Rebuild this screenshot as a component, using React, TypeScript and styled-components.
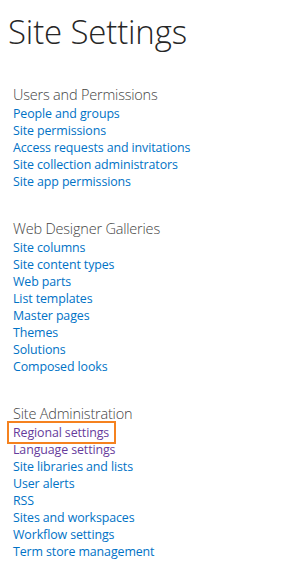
import styled, { createGlobalStyle } from 'styled-components';

const GlobalStyle = createGlobalStyle`
  html, body {
    margin: 0;
    padding: 0;
    background: #ffffff;
  }
  body {
    font-family: "Open Sans", "Liberation Sans", sans-serif;
  }
`;

const Page = styled.div`
  width: 300px;
  height: 571px;
  overflow: hidden;
  background: #ffffff;
`;

const Title = styled.h1`
  margin: 0;
  padding: 10px 0 0 8px;
  font-family: "Open Sans", sans-serif;
  font-weight: 300;
  font-size: 33px;
  line-height: 44px;
  letter-spacing: -0.15px;
  color: #262626;
`;

const Sections = styled.div`
  display: flex;
  flex-direction: column;
  gap: 30px;
  padding: 32px 0 0 13px;
`;

const Section = styled.section`
  display: flex;
  flex-direction: column;
`;

const SectionTitle = styled.h2`
  margin: 0 0 1px;
  font-family: "Open Sans", sans-serif;
  font-weight: 300;
  font-size: 14.5px;
  line-height: 18px;
  letter-spacing: -0.2px;
  color: #444444;
`;

const LinkList = styled.ul`
  margin: 0;
  padding: 0;
  list-style: none;
`;

const LinkItem = styled.li`
  height: 17px;
  display: flex;
  align-items: center;
`;

const SettingLink = styled.a<{ $visited?: boolean; $highlight?: boolean }>`
  position: relative;
  font-family: "Open Sans", sans-serif;
  font-size: 12.4px;
  line-height: 17px;
  letter-spacing: -0.1px;
  text-decoration: none;
  color: ${p => (p.$visited ? '#663b9c' : '#0072c6')};

  ${p =>
    p.$highlight &&
    `
    &::after {
      content: '';
      position: absolute;
      left: -6px;
      right: -7px;
      top: -3px;
      bottom: -3px;
      border: 2.5px solid #f5821f;
    }
  `}
`;

type Link = { label: string; visited?: boolean; highlight?: boolean };

const sections: { title: string; links: Link[] }[] = [
  {
    title: 'Users and Permissions',
    links: [
      { label: 'People and groups' },
      { label: 'Site permissions' },
      { label: 'Access requests and invitations' },
      { label: 'Site collection administrators' },
      { label: 'Site app permissions' },
    ],
  },
  {
    title: 'Web Designer Galleries',
    links: [
      { label: 'Site columns' },
      { label: 'Site content types' },
      { label: 'Web parts' },
      { label: 'List templates' },
      { label: 'Master pages' },
      { label: 'Themes' },
      { label: 'Solutions' },
      { label: 'Composed looks' },
    ],
  },
  {
    title: 'Site Administration',
    links: [
      { label: 'Regional settings', visited: true, highlight: true },
      { label: 'Language settings', visited: true },
      { label: 'Site libraries and lists' },
      { label: 'User alerts' },
      { label: 'RSS' },
      { label: 'Sites and workspaces' },
      { label: 'Workflow settings' },
      { label: 'Term store management' },
    ],
  },
];

export default function App() {
  return (
    <Page>
      <GlobalStyle />
      <Title>Site Settings</Title>
      <Sections>
        {sections.map(s => (
          <Section key={s.title}>
            <SectionTitle>{s.title}</SectionTitle>
            <LinkList>
              {s.links.map(l => (
                <LinkItem key={l.label}>
                  <SettingLink href="#" $visited={l.visited} $highlight={l.highlight}>
                    {l.label}
                  </SettingLink>
                </LinkItem>
              ))}
            </LinkList>
          </Section>
        ))}
      </Sections>
    </Page>
  );
}
